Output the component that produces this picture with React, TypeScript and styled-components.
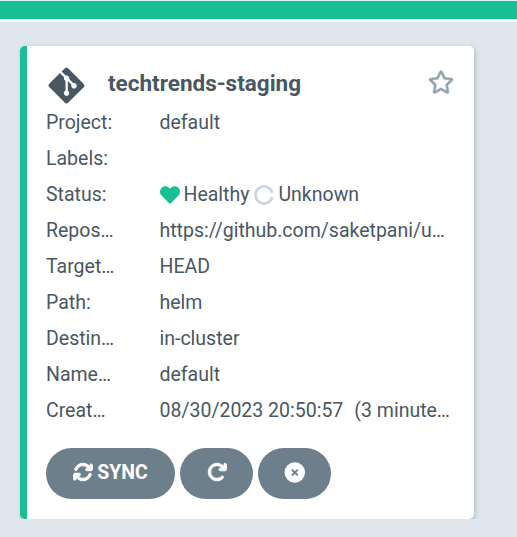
import React from 'react';
import styled, { createGlobalStyle } from 'styled-components';
import { FaGitAlt, FaRegStar, FaHeart } from 'react-icons/fa';
import { FaArrowsRotate, FaArrowRotateRight } from 'react-icons/fa6';

const Global = createGlobalStyle`
  * { box-sizing: border-box; }
  body { margin: 0; background: #dee6eb; font-family: Roboto, sans-serif; color: #495763; }
`;
const TopBar = styled.div`height: 22px; background: #18be94; border-top: 1px solid #d9f7f0; border-bottom: 3px solid #fff;`;
const Card = styled.article`
  margin: 24px 0 0 20px; width: 454px; height: 473px; background: #fff;
  border-left: 7px solid #18be94; border-radius: 5px; padding: 19px 20px 0 19px;
  box-shadow: 1px 2px 4px rgba(60,80,95,.3);
`;
const Header = styled.header`display: flex; align-items: flex-start; height: 40px;`;
const Title = styled.h1`margin: 0 auto 0 21px; font-size: 22.5px; font-weight: 700; line-height: 37px;`;
const StarIcon = styled(FaRegStar)`margin-top: 4px; stroke: #8fa4b1; stroke-width: 10px;`;
const Row = styled.div`display: grid; grid-template-columns: 70px 291px; column-gap: 43.5px; height: 36px; line-height: 36px; font-size: 19.5px;`;
const Text = styled.div`overflow: hidden; white-space: pre;`;
const Age = styled.span`margin-left: 11px;`;
const Status = styled.div`display: flex; align-items: center; gap: 4px;`;
const Ring = styled.svg`margin-left: 1px;`;
const Actions = styled.div`display: flex; gap: 5px; margin-top: 19px;`;
const Button = styled.button<{ $w: number }>`
  width: ${p => p.$w}px; height: 51px; padding: 0 0 3px; border: 0; border-radius: 26px; background: #6d7f8b; color: #fff;
  font: 700 19.4px Roboto, sans-serif; display: flex; align-items: center; justify-content: center; gap: 4px;
`;
const SyncIcon = styled(FaArrowsRotate)`stroke: #fff; stroke-width: 24px; overflow: visible;`;
const RefreshIcon = styled(FaArrowRotateRight)`stroke: #fff; stroke-width: 24px; overflow: visible;`;

const rows = [
  ['Project:', 'default'],
  ['Labels:', ''],
  ['Status:', 'status'],
  ['Repos…', 'https://github.com/saketpani/u…'],
  ['Target…', 'HEAD'],
  ['Path:', 'helm'],
  ['Destin…', 'in-cluster'],
  ['Name…', 'default'],
  ['Creat…', '08/30/2023 20:50:57', '(3 minute…'],
];

const UnknownIcon = () => (
  <Ring width="20" height="20" viewBox="0 0 20 20" fill="none" stroke="#ccd6dd" strokeWidth="2.8">
    <path d="M18.2 7.8A8.5 8.5 0 1 0 18.2 12.2" />
  </Ring>
);
const TerminateIcon = () => (
  <svg width="21" height="21" viewBox="0 0 21 21">
    <circle cx="10.8" cy="10.5" r="10.2" fill="#fff" />
    <path d="M7.9 7.6l5.8 5.8M13.7 7.6l-5.8 5.8" stroke="#6d7f8b" strokeWidth="2" />
  </svg>
);

export default function App() {
  return (
    <>
      <Global />
      <TopBar />
      <Card>
        <Header>
          <FaGitAlt size={41} />
          <Title>techtrends-staging</Title>
          <StarIcon size={26} color="#8fa4b1" />
        </Header>
        {rows.map(([label, value, age]) => (
          <Row key={label}>
            <Text>{label}</Text>
            {value === 'status' ? (
              <Status><FaHeart size={20} color="#18be94" />Healthy<UnknownIcon />Unknown</Status>
            ) : (
              <Text>{value}{age && <Age>{age}</Age>}</Text>
            )}
          </Row>
        ))}
        <Actions>
          <Button $w={129}><SyncIcon size={20} />SYNC</Button>
          <Button $w={73}><RefreshIcon size={20} /></Button>
          <Button $w={73}><TerminateIcon /></Button>
        </Actions>
      </Card>
    </>
  );
}
